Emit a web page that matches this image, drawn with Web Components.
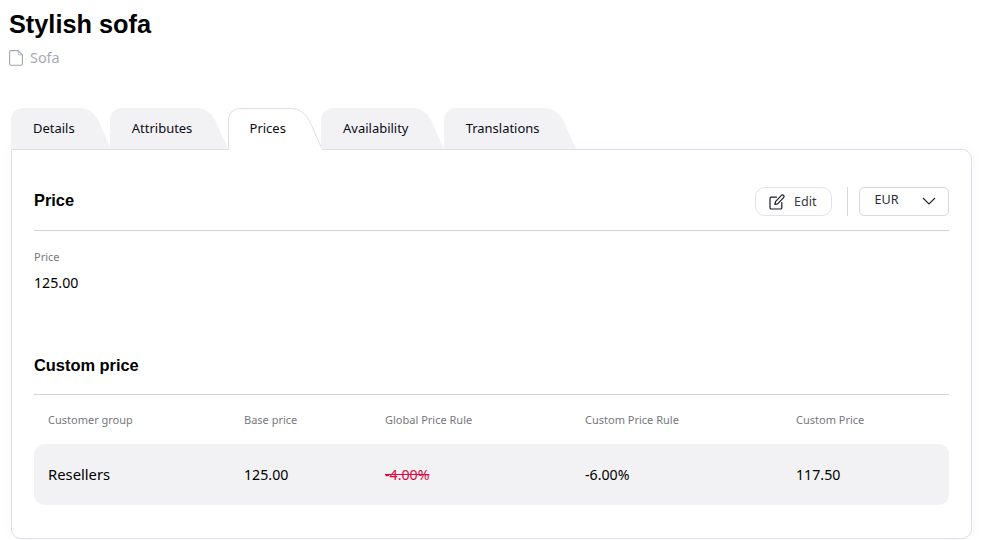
<!DOCTYPE html>
<html>
<head>
<meta charset="utf-8">
<style>
  html, body { margin: 0; padding: 0; background: #fff; overflow: hidden; }
  body { font-family: "Noto Sans", sans-serif; color: #000; width: 982px; height: 540px; }
</style>
</head>
<body>
<product-page>
  <page-title slot="title" heading="Stylish sofa" kind="Sofa"></page-title>
  <tab-bar slot="tabs">
    <tab-item>Details</tab-item>
    <tab-item>Attributes</tab-item>
    <tab-item active>Prices</tab-item>
    <tab-item>Availability</tab-item>
    <tab-item>Translations</tab-item>
  </tab-bar>
  <tab-panel slot="panel">
    <section-head heading="Price">
      <edit-button>Edit</edit-button>
      <span-divider></span-divider>
      <currency-select>EUR</currency-select>
    </section-head>
    <price-field label="Price" value="125.00"></price-field>
    <section-head class="second" heading="Custom price"></section-head>
    <price-table></price-table>
  </tab-panel>
</product-page>

<script>
class ProductPage extends HTMLElement {
  constructor() {
    super();
    this.attachShadow({mode: 'open'}).innerHTML = `
      <style>
        :host { display: block; padding: 0 10px 0 11px; }
        .head { margin-left: -2px; height: 108px; }
        .tabs { height: 41px; position: relative; z-index: 1; }
      </style>
      <div class="head"><slot name="title"></slot></div>
      <div class="tabs"><slot name="tabs"></slot></div>
      <slot name="panel"></slot>
    `;
  }
}

class PageTitle extends HTMLElement {
  connectedCallback() {
    this.attachShadow({mode: 'open'}).innerHTML = `
      <style>
        :host { display: block; padding-top: 9px; }
        h1 { margin: 0; font: bold 25.3px/30px "Liberation Sans", sans-serif; color: #000; }
        .kind { display: flex; align-items: center; gap: 7px; margin-top: 9px; font-size: 14.4px; line-height: 20px; color: #a9a9b2; }
        svg { display: block; }
      </style>
      <h1>${this.getAttribute('heading')}</h1>
      <div class="kind">
        <svg width="14" height="16" viewBox="0 0 14 16" fill="none" stroke="#a6a6ad" stroke-width="1.1" stroke-linejoin="round">
          <path d="M2 .6H9.2L13.4 4.8V13.6A1.6 1.6 0 0 1 11.8 15.2H2.2A1.6 1.6 0 0 1 .6 13.6V2A1.4 1.4 0 0 1 2 .6Z"/>
          <path d="M9.2 .6V3.4A1.4 1.4 0 0 0 10.6 4.8H13.4" stroke-width=".8"/>
        </svg>
        <span>${this.getAttribute('kind')}</span>
      </div>
    `;
  }
}

class TabBar extends HTMLElement {
  constructor() {
    super();
    this.attachShadow({mode: 'open'}).innerHTML = `
      <style>:host { display: flex; height: 41px; align-items: stretch; }</style>
      <slot></slot>
    `;
  }
}

class TabItem extends HTMLElement {
  connectedCallback() {
    let active = this.hasAttribute('active');
    let fill = active ? '#fff' : '#f2f2f5';
    let edge = active ? '#dfdfe8' : 'none';
    this.attachShadow({mode: 'open'}).innerHTML = `
      <style>
        :host { display: flex; height: ${active ? 42 : 41}px; margin-right: -0.75px; font-size: 12.96px; color: #0a0a14; }
        .label {
          position: relative; z-index: 1;
          padding-left: 22px; line-height: 41px; background: ${fill};
          border-radius: 12px 0 0 0; box-sizing: border-box;
          ${active ? 'border: 1px solid #dfdfe8; border-right: 0; border-bottom: 0; padding-left: 21px; line-height: 39px;' : ''}
        }
        svg { display: block; flex: none; margin-left: -1px; }
      </style>
      <div class="label"><slot></slot></div>
      <svg width="37" height="${active ? 42 : 41}" viewBox="0 0 37 ${active ? 42 : 41}">
        <path d="M0 ${active ? .5 : 0}H5C14 ${active ? .5 : 0} 21 5 25 14L37 ${active ? 42 : 41}H0Z" fill="${fill}" stroke="none"/>
        <path d="M0 .5H5C14 .5 21 5 25 14L37 41" fill="none" stroke="${edge}"/>
      </svg>
    `;
  }
}

class TabPanel extends HTMLElement {
  constructor() {
    super();
    this.attachShadow({mode: 'open'}).innerHTML = `
      <style>
        :host {
          display: block; box-sizing: border-box; height: 390px; padding: 22px 22px 0;
          background: #fff; border: 1px solid #dfdfe8; border-radius: 0 10px 10px 10px;
          box-shadow: 0 0 12px rgba(90,110,255,.05);
        }
      </style>
      <slot></slot>
    `;
  }
}

class SectionHead extends HTMLElement {
  connectedCallback() {
    this.attachShadow({mode: 'open'}).innerHTML = `
      <style>
        :host { display: flex; align-items: center; justify-content: space-between; box-sizing: border-box; height: 59px; padding: 15px 0 14px; border-bottom: 1px solid #d4d4d8; }
        :host(.second) { height: 52px; margin-top: 50px; padding: 12px 0 0; align-items: flex-start; }
        h2 { margin: 0 0 3px; font: bold 16.4px/20px "Liberation Sans", sans-serif; color: #000; }
        :host(.second) h2 { margin: 0; }
        .tools { display: flex; align-items: center; }
      </style>
      <h2>${this.getAttribute('heading')}</h2>
      <div class="tools"><slot></slot></div>
    `;
  }
}

class EditButton extends HTMLElement {
  constructor() {
    super();
    this.attachShadow({mode: 'open'}).innerHTML = `
      <style>
        :host { display: flex; align-items: center; box-sizing: border-box; width: 77px; height: 29px; padding: 0 0 1px 13px; gap: 9px; border: 1px solid #e2e2e8; border-radius: 10px; font-size: 12.6px; color: #3a3a44; }
        svg { display: block; margin-top: 1px; }
      </style>
      <svg width="16" height="16" viewBox="0 0 16 16" fill="none" stroke="#1a1a22" stroke-width="1.2" stroke-linecap="round" stroke-linejoin="round">
        <path d="M7.5 3.2H2.2A1.2 1.2 0 0 0 1 4.4V13.8A1.2 1.2 0 0 0 2.2 15H11.6A1.2 1.2 0 0 0 12.8 13.8V8.5"/>
        <path d="M12.4 1.4A1.4 1.4 0 0 1 14.6 3.6L8.6 9.8L5.9 10.4L6.5 7.6Z"/>
      </svg>
      <slot></slot>
    `;
  }
}

class SpanDivider extends HTMLElement {
  constructor() {
    super();
    this.attachShadow({mode: 'open'}).innerHTML = `
      <style>:host { display: block; width: 1px; height: 29px; background: #d8d8dc; margin: 0 11px 0 15px; }</style>
    `;
  }
}

class CurrencySelect extends HTMLElement {
  constructor() {
    super();
    this.attachShadow({mode: 'open'}).innerHTML = `
      <style>
        :host { display: flex; align-items: center; justify-content: space-between; box-sizing: border-box; width: 90px; height: 29px; padding: 0 12px 4px 14.5px; border: 1px solid #d8d8dc; border-radius: 5px; font-size: 12.6px; color: #2a2a34; }
        svg { display: block; margin-top: 3px; }
      </style>
      <slot></slot>
      <svg width="14" height="8" viewBox="0 0 14 8" fill="none" stroke="#222" stroke-width="1.1"><path d="M1 1L7 7L13 1"/></svg>
    `;
  }
}

class PriceField extends HTMLElement {
  connectedCallback() {
    this.attachShadow({mode: 'open'}).innerHTML = `
      <style>
        :host { display: block; padding-top: 18px; }
        .label { font-size: 11px; line-height: 16px; color: #77777f; }
        .value { font-size: 14.2px; line-height: 20px; margin-top: 8px; color: #000; }
      </style>
      <div class="label">${this.getAttribute('label')}</div>
      <div class="value">${this.getAttribute('value')}</div>
    `;
  }
}

class PriceTable extends HTMLElement {
  constructor() {
    super();
    this.attachShadow({mode: 'open'}).innerHTML = `
      <style>
        :host { display: block; }
        .row { display: grid; grid-template-columns: 196px 141px 200px 211px 1fr; padding-left: 14px; align-items: center; }
        .head { height: 49px; font-size: 11px; color: #77777f; }
        .body { height: 61px; background: #f2f2f5; border-radius: 10px; font-size: 14.2px; color: #000; }
        .name { font-size: 14.8px; margin-bottom: 2px; }
        s { color: #e0063e; }
      </style>
      <div class="row head">
        <span>Customer group</span><span>Base price</span><span>Global Price Rule</span><span>Custom Price Rule</span><span>Custom Price</span>
      </div>
      <div class="row body">
        <span class="name">Resellers</span><span>125.00</span><span><s>-4.00%</s></span><span>-6.00%</span><span>117.50</span>
      </div>
    `;
  }
}

customElements.define('product-page', ProductPage);
customElements.define('page-title', PageTitle);
customElements.define('tab-bar', TabBar);
customElements.define('tab-item', TabItem);
customElements.define('tab-panel', TabPanel);
customElements.define('section-head', SectionHead);
customElements.define('edit-button', EditButton);
customElements.define('span-divider', SpanDivider);
customElements.define('currency-select', CurrencySelect);
customElements.define('price-field', PriceField);
customElements.define('price-table', PriceTable);
</script>
</body>
</html>
